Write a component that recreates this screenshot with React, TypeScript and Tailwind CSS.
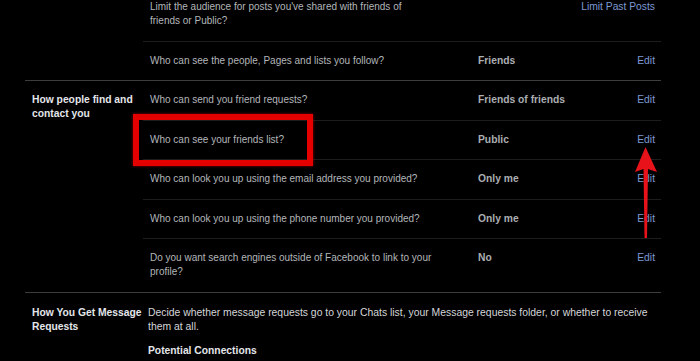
import React from 'react';

type Row = {
  question: string;
  value?: string;
  action: string;
};

const activityRows: Row[] = [
  {
    question: "Limit the audience for posts you've shared with friends of friends or Public?",
    action: 'Limit Past Posts',
  },
  { question: 'Who can see the people, Pages and lists you follow?', value: 'Friends', action: 'Edit' },
];

const findRows: Row[] = [
  { question: 'Who can send you friend requests?', value: 'Friends of friends', action: 'Edit' },
  { question: 'Who can see your friends list?', value: 'Public', action: 'Edit' },
  { question: 'Who can look you up using the email address you provided?', value: 'Only me', action: 'Edit' },
  { question: 'Who can look you up using the phone number you provided?', value: 'Only me', action: 'Edit' },
  {
    question: 'Do you want search engines outside of Facebook to link to your profile?',
    value: 'No',
    action: 'Edit',
  },
];

function SettingsSection({ label, rows, top }: { label: string; rows: Row[]; top?: boolean }) {
  return (
    <div className={`flex ${top ? 'border-t border-[#3d3d3d]' : ''}`}>
      <div className="w-[118px] shrink-0 pl-[7px] pt-[12.25px] font-bold text-[#e4e6eb]">{label}</div>
      <div className="flex-1">
        {rows.map((row, i) => (
          <div
            key={row.question}
            className={`grid grid-cols-[328px_1fr_auto] py-[12.25px] pl-[7px] pr-[6px] ${
              i < rows.length - 1 ? 'border-b border-[#1d1d1d]' : ''
            }`}
          >
            <div className="max-w-[284px] text-[10px] text-[#b3b6ba]">{row.question}</div>
            <div className="font-bold text-[#abaeb2]">{row.value}</div>
            <a className="text-[#7d99d4]">{row.action}</a>
          </div>
        ))}
      </div>
    </div>
  );
}

export default function App() {
  return (
    <div className="relative h-[361px] w-[700px] overflow-hidden bg-black font-['Liberation_Sans',Arial,sans-serif] text-[10.3px] leading-[14px]">
      <div className="ml-[25px] -mt-[12px] w-[636px]">
        <SettingsSection label="" rows={activityRows} />
        <SettingsSection label="How people find and contact you" rows={findRows} top />

        <div className="flex border-t border-[#3d3d3d] pt-[13px]">
          <div className="w-[118px] shrink-0 pl-[7px] font-bold text-[#e4e6eb]">How You Get Message Requests</div>
          <div className="flex-1 pl-[5px]">
            <p className="text-[10.4px] text-[#d4d6da]">
              Decide whether message requests go to your Chats list, your Message requests folder, or whether to receive
              them at all.
            </p>
            <p className="mt-[10px] font-bold text-[#e4e6eb]">Potential Connections</p>
          </div>
        </div>
      </div>

      {/* annotation: highlight box */}
      <div className="absolute left-[133px] top-[114px] h-[52px] w-[180px] border-[6px] border-[#e50000] shadow-[0_0_3px_rgba(230,0,0,0.6)]" />

      {/* annotation: arrow */}
      <svg className="absolute left-[630px] top-[144px]" width="32" height="98" viewBox="0 0 32 98">
        <polygon points="15.5,3 27,28 18,25 17,94 14.5,94 13.5,25 5,28" fill="#e8121a" />
      </svg>
    </div>
  );
}
